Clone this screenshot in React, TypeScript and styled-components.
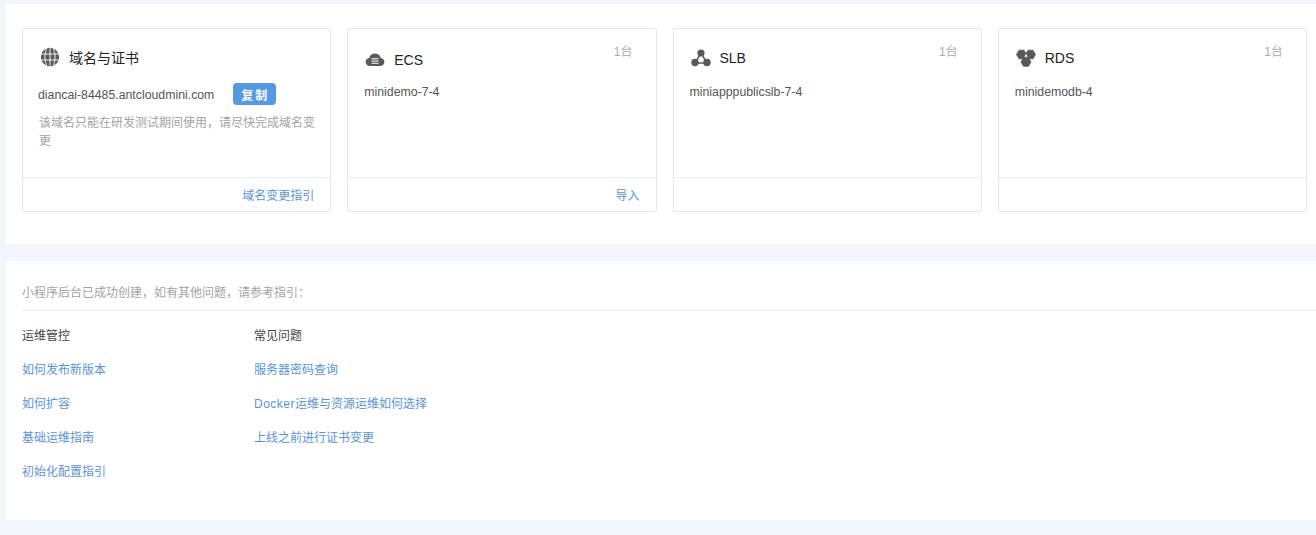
import React from "react";
import styled, { createGlobalStyle } from "styled-components";

const Global = createGlobalStyle`
  html, body { margin: 0; padding: 0; background: #f3f6fc; }
  body { font-family: "Liberation Sans", "Noto Sans CJK SC", sans-serif; font-size: 12px; color: #333; }
`;

const Page = styled.div`
  width: 1316px;
  height: 535px;
  overflow: hidden;
  padding: 4px 0 0 6px;
  box-sizing: border-box;
  display: flex;
  flex-direction: column;
  gap: 17px;
`;
const TopPanel = styled.section`
  background: #fff;
  height: 240px;
  box-sizing: border-box;
  padding: 24px 9px 0 16px;
`;
const CardGrid = styled.div`
  display: grid;
  grid-template-columns: repeat(4, 1fr);
  gap: 16px;
`;
const Card = styled.article`
  height: 184px;
  box-sizing: border-box;
  border: 1px solid #e4e7ec;
  border-radius: 2px;
  display: flex;
  flex-direction: column;
  position: relative;
`;
const CardBody = styled.div`
  height: 149px;
  box-sizing: border-box;
  padding: 17px 16px 0;
  border-bottom: 1px solid #e8eaee;
`;
const CardHead = styled.div<{ $top: number; $bottom: number }>`
  display: flex;
  align-items: center;
  gap: 9px;
  height: 24px;
  margin: ${(p) => p.$top}px 0 ${(p) => p.$bottom}px 1px;
`;
const CardTitle = styled.h3`
  margin: 0;
  font-size: 14px;
  font-weight: 400;
  color: #222;
`;
const Count = styled.span`
  position: absolute;
  top: 13px;
  right: 23px;
  font-size: 12px;
  color: #aaa;
`;
const DomainRow = styled.div`
  display: flex;
  align-items: center;
  gap: 19px;
  height: 22px;
  margin-left: -1px;
  color: #555;
  font-size: 12.3px;
`;
const DomainText = styled.span`
  padding-top: 2px;
`;
const CopyButton = styled.button`
  border: 0;
  padding: 0 0 0 1px;
  width: 43px;
  height: 22px;
  border-radius: 4px;
  background: #5599e3;
  color: #fff;
  font-family: inherit;
  font-size: 12px;
  font-weight: 700;
  letter-spacing: 2px;
`;
const Note = styled.p`
  margin: 9px -3px 0 0;
  font-size: 12px;
  line-height: 18px;
  color: #a3a3a3;
`;
const Resource = styled.div`
  font-size: 12.3px;
  line-height: 18px;
  color: #555;
`;
const CardFoot = styled.div`
  flex: 1;
  display: flex;
  align-items: center;
  justify-content: flex-end;
  padding: 0 16px 1px 0;
`;
const Link = styled.a`
  color: #5b93d8;
  font-size: 12px;
  text-decoration: none;
`;
const Latin = styled.span`
  letter-spacing: 0.5px;
`;
const BottomPanel = styled.section`
  background: #fff;
  height: 259px;
  box-sizing: border-box;
  padding: 24px 0 0 16px;
`;
const Intro = styled.div`
  height: 25px;
  line-height: 17px;
  font-size: 12px;
  color: #a3a3a3;
  border-bottom: 1px solid #e8eaee;
`;
const Columns = styled.div`
  display: flex;
  margin-top: 16px;
`;
const Column = styled.div`
  width: 232px;
  display: flex;
  flex-direction: column;
  gap: 16px;
  line-height: 18px;
`;
const ColumnTitle = styled.div`
  color: #444;
  font-size: 12px;
`;

const Icon = styled.svg`
  width: 20px;
  height: 20px;
  flex: none;
  display: block;
`;

const Globe = () => (
  <Icon viewBox="0 0 20 20">
    <circle cx="10" cy="10" r="9.2" fill="#595959" />
    <g stroke="#fff" strokeWidth="0.9" fill="none">
      <path d="M1 7h18M1 13h18M10 1v18" />
      <path d="M6.7 1.6c-2.3 5-2.3 11.8 0 16.8M13.3 1.6c2.3 5 2.3 11.8 0 16.8" />
    </g>
  </Icon>
);
const Cloud = () => (
  <Icon viewBox="0 0 20 20">
    <path d="M5.2 16C2.6 16 .6 14.2.6 11.900c0-2 1.500-3.700 3.600-4C4.800 5.400 7.100 3.600 10 3.600s5.200 1.800 5.800 4.300c2.100.3 3.600 2 3.600 4 0 2.300-2 4.100-4.600 4.100z" fill="#595959" />
    <path d="M6.500 8.800h7M6.500 11h7M6.500 13.200h7" stroke="#fff" strokeWidth="1.100" />
  </Icon>
);
const Nodes = () => (
  <Icon viewBox="0 0 20 20">
    <path d="M10 5 4 15h12z" fill="none" stroke="#595959" strokeWidth="1.500" />
    <circle cx="10" cy="5" r="3.600" fill="#595959" />
    <circle cx="4" cy="14.500" r="3.700" fill="#595959" />
    <circle cx="16" cy="14.500" r="3.700" fill="#595959" />
  </Icon>
);
const Hexes = () => (
  <Icon viewBox="0 0 20 20">
    <g fill="#595959" stroke="#595959" strokeWidth="0.8" strokeLinejoin="round">
      <polygon points="0.5,6.500 3,2.200 8,2.200 10.500,6.500 8,10.800 3,10.800" />
      <polygon points="9.500,6.500 12,2.200 17,2.200 19.500,6.500 17,10.800 12,10.800" />
      <polygon points="5,14 7.500,9.700 12.500,9.700 15,14 12.500,18.300 7.500,18.300" />
    </g>
    <polygon points="10,5.800 11.600,8.700 8.400,8.700" fill="#fff" />
  </Icon>
);

const resources = [
  { icon: <Cloud />, title: "ECS", name: "minidemo-7-4", action: "导入", top: 2, bottom: 11 },
  { icon: <Nodes />, title: "SLB", name: "miniapppublicslb-7-4", top: 0, bottom: 13 },
  { icon: <Hexes />, title: "RDS", name: "minidemodb-4", top: 0, bottom: 13 },
];

const ops = ["如何发布新版本", "如何扩容", "基础运维指南", "初始化配置指引"];

export default function App() {
  return (
    <Page>
      <Global />
      <TopPanel>
        <CardGrid>
          <Card>
            <CardBody>
              <CardHead $top={-1} $bottom={14}>
                <Globe />
                <CardTitle>域名与证书</CardTitle>
              </CardHead>
              <DomainRow>
                <DomainText>diancai-84485.antcloudmini.com</DomainText>
                <CopyButton>复制</CopyButton>
              </DomainRow>
              <Note>该域名只能在研发测试期间使用，请尽快完成域名变更</Note>
            </CardBody>
            <CardFoot>
              <Link href="#">域名变更指引</Link>
            </CardFoot>
          </Card>
          {resources.map((r) => (
            <Card key={r.title}>
              <Count>1台</Count>
              <CardBody>
                <CardHead $top={r.top} $bottom={r.bottom}>
                  {r.icon}
                  <CardTitle>{r.title}</CardTitle>
                </CardHead>
                <Resource>{r.name}</Resource>
              </CardBody>
              <CardFoot>{r.action && <Link href="#">{r.action}</Link>}</CardFoot>
            </Card>
          ))}
        </CardGrid>
      </TopPanel>
      <BottomPanel>
        <Intro>小程序后台已成功创建，如有其他问题，请参考指引：</Intro>
        <Columns>
          <Column>
            <ColumnTitle>运维管控</ColumnTitle>
            {ops.map((t) => (
              <Link href="#" key={t}>{t}</Link>
            ))}
          </Column>
          <Column>
            <ColumnTitle>常见问题</ColumnTitle>
            <Link href="#">服务器密码查询</Link>
            <Link href="#"><Latin>Docker</Latin>运维与资源运维如何选择</Link>
            <Link href="#">上线之前进行证书变更</Link>
          </Column>
        </Columns>
      </BottomPanel>
    </Page>
  );
}
